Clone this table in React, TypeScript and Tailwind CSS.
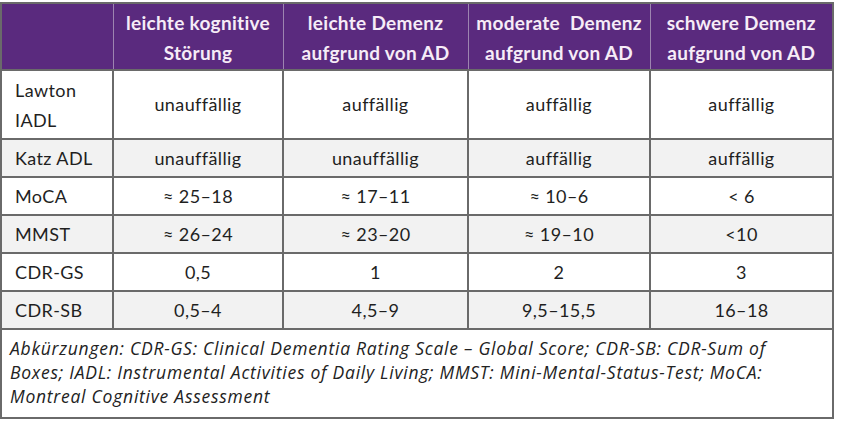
const head = [
  "leichte kognitive\nStörung",
  "leichte Demenz\naufgrund von AD",
  "moderate  Demenz\naufgrund von AD",
  "schwere Demenz\naufgrund von AD",
];

const rows: { label: string; cells: string[]; shade: boolean; tall?: boolean }[] = [
  { label: "Lawton IADL", cells: ["unauffällig", "auffällig", "auffällig", "auffällig"], shade: false, tall: true },
  { label: "Katz ADL", cells: ["unauffällig", "unauffällig", "auffällig", "auffällig"], shade: true },
  { label: "MoCA", cells: ["≈ 25–18", "≈ 17–11", "≈ 10–6", "< 6"], shade: false },
  { label: "MMST", cells: ["≈ 26–24", "≈ 23–20", "≈ 19–10", "<10"], shade: true },
  { label: "CDR-GS", cells: ["0,5", "1", "2", "3"], shade: false },
  { label: "CDR-SB", cells: ["0,5–4", "4,5–9", "9,5–15,5", "16–18"], shade: true },
];

export default function App() {
  return (
    <div className="min-h-screen bg-white pt-[2px] font-['Lato',sans-serif] text-[#1f1f1f]">
      <table className="table-fixed border-collapse w-[832px] border-2 border-[#6a6a6a]">
        <colgroup>
          <col className="w-[112px]" />
          <col className="w-[170px]" />
          <col className="w-[185px]" />
          <col className="w-[182px]" />
          <col className="w-[183px]" />
        </colgroup>
        <thead>
          <tr className="bg-[#5a2a7e] text-[#f6ecf7]">
            <th className="h-[67px] border-r border-[#9d84b0]"></th>
            {head.map((h, i) => (
              <th
                key={i}
                className="h-[67px] px-1 pt-[2px] text-center text-[19px] font-bold leading-[30px] tracking-[0.3px] whitespace-pre-wrap border-r border-[#9d84b0] last:border-r-0"
              >
                {h}
              </th>
            ))}
          </tr>
        </thead>
        <tbody className="text-[18px] tracking-[0.4px]">
          {rows.map((r) => (
            <tr key={r.label} className={r.shade ? "bg-[#f2f2f2]" : "bg-white"}>
              <td
                className={`${r.tall ? "h-[69px] leading-[30px]" : "h-[38px] leading-[24px]"} pl-[13px] pr-2 border-2 border-[#6a6a6a]`}
              >
                {r.tall ? <span className="block w-[70px]">{r.label}</span> : r.label}
              </td>
              {r.cells.map((c, i) => (
                <td key={i} className="text-center border-2 border-[#6a6a6a]">
                  {c}
                </td>
              ))}
            </tr>
          ))}
          <tr>
            <td colSpan={5} className="h-[89px] px-[8px] pt-[6px] align-top border-2 border-[#6a6a6a]">
              <p className="font-['Open_Sans',sans-serif] italic font-normal text-[17.5px] leading-[24px] tracking-[0.75px] text-[#222]">
                Abkürzungen: CDR-GS: Clinical Dementia Rating Scale – Global Score; CDR-SB: CDR-Sum of
                <br />
                Boxes; IADL: Instrumental Activities of Daily Living; MMST: Mini-Mental-Status-Test; MoCA:
                <br />
                Montreal Cognitive Assessment
              </p>
            </td>
          </tr>
        </tbody>
      </table>
    </div>
  );
}
